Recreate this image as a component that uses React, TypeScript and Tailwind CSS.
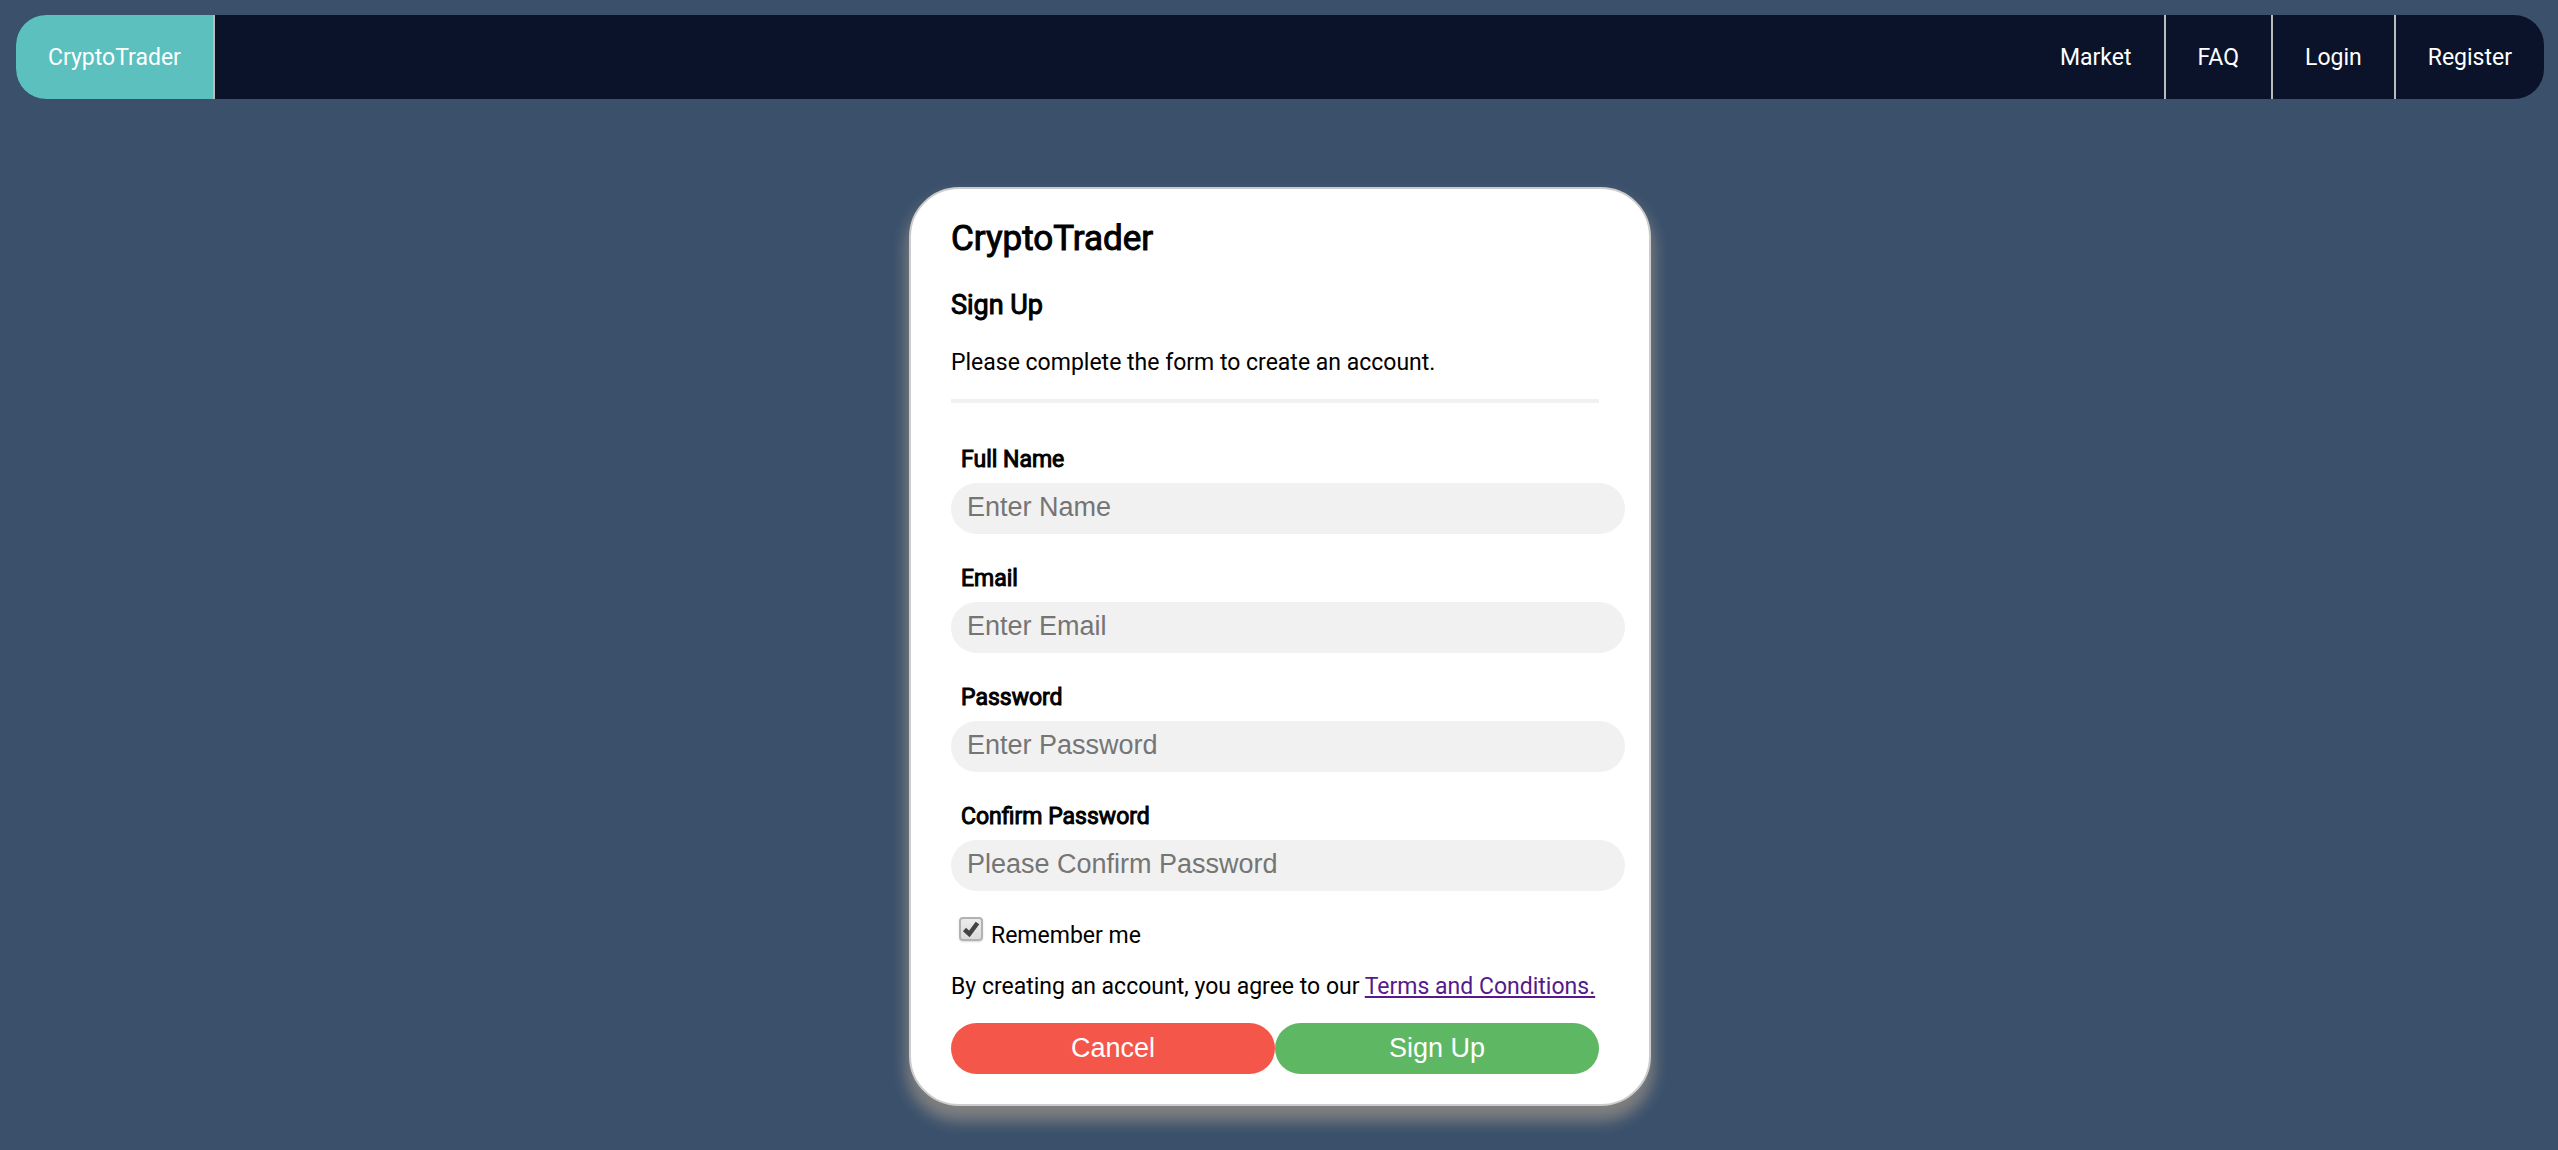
const navLinks = ["Market", "FAQ", "Login", "Register"];

const fields = [
  { id: "name", label: "Full Name", type: "text", placeholder: "Enter Name" },
  { id: "email", label: "Email", type: "email", placeholder: "Enter Email" },
  { id: "password", label: "Password", type: "password", placeholder: "Enter Password" },
  { id: "confirm", label: "Confirm Password", type: "password", placeholder: "Please Confirm Password" },
];

function NavBar() {
  return (
    <nav className="flex overflow-hidden rounded-[30px] bg-[#0b132b] text-white">
      <a href="#home" className="border-r-2 border-[#bbb] bg-[#5bc0be] px-8 pt-7 pb-[26px]">
        CryptoTrader
      </a>
      <div className="ml-auto flex">
        {navLinks.map((name) => (
          <a key={name} href={"#" + name.toLowerCase()} className="border-r-2 border-[#bbb] px-8 pt-7 pb-[26px] last:border-r-0">
            {name}
          </a>
        ))}
      </div>
    </nav>
  );
}

function SignUpForm() {
  return (
    <form className="mx-auto mt-[88px] w-full max-w-[742px] rounded-[50px] border-2 border-[#ccc] bg-white pt-[30px] pr-[50px] pb-[30px] pl-10 text-black shadow-[0_12px_15px_3px_#808080]">
      <h1 className="text-[35px] leading-10 font-normal [-webkit-text-stroke:1px]">CryptoTrader</h1>
      <h2 className="mt-[30px] text-[27px] leading-8 font-normal [-webkit-text-stroke:1px]">Sign Up</h2>
      <p className="mt-[27px]">Please complete the form to create an account.</p>
      <hr className="mt-[21px] mb-[42px] border-t-4 border-[#f1f1f1]" />

      <div className="-mr-[26px] flex flex-col gap-[30px]">
        {fields.map((field) => (
          <div key={field.id} className="flex flex-col gap-2">
            <label htmlFor={field.id} className="pl-[10px] [-webkit-text-stroke:1px]">
              {field.label}
            </label>
            <input
              id={field.id}
              type={field.type}
              placeholder={field.placeholder}
              className="h-[51px] w-full rounded-full bg-[#f1f1f1] px-4 pb-[2px] font-['Liberation_Sans',Arial,sans-serif] text-[27px] placeholder:text-[#757575]"
            />
          </div>
        ))}
      </div>

      <label className="mt-[26px] ml-2 flex items-start gap-2">
        <span className="relative">
          <input
            type="checkbox"
            defaultChecked
            className="peer block size-6 appearance-none rounded-[4px] border-2 border-[#b2b2b2] bg-linear-to-b from-[#ececec] to-[#dcdcdc] shadow-[0_1px_2px_#00000026]"
          />
          <svg viewBox="0 0 24 24" className="pointer-events-none absolute inset-0 hidden size-6 peer-checked:block" aria-hidden="true">
            <path d="M5.5 12.5 L10.3 17 L18.5 6" fill="none" stroke="#444" strokeWidth="4.5" />
          </svg>
        </span>
        <span className="mt-1">Remember me</span>
      </label>

      <p className="mt-[21px]">
        By creating an account, you agree to our{" "}
        <a href="#terms" className="text-[#551a8b] underline decoration-2 underline-offset-2">
          Terms and Conditions.
        </a>
      </p>

      <div className="mt-[21px] flex font-['Liberation_Sans',Arial,sans-serif] text-[27px] text-white">
        <button type="button" className="h-[51px] flex-1 rounded-full bg-[#f5564a] pb-[2px]">
          Cancel
        </button>
        <button type="submit" className="h-[51px] flex-1 rounded-full bg-[#5eb762] pb-[2px]">
          Sign Up
        </button>
      </div>
    </form>
  );
}

export default function App() {
  return (
    <div className="min-h-screen bg-[#3a506b] pt-[15px] pr-[14px] pb-11 pl-4 font-['Roboto',sans-serif] text-[23px] leading-[30px]">
      <NavBar />
      <SignUpForm />
    </div>
  );
}
